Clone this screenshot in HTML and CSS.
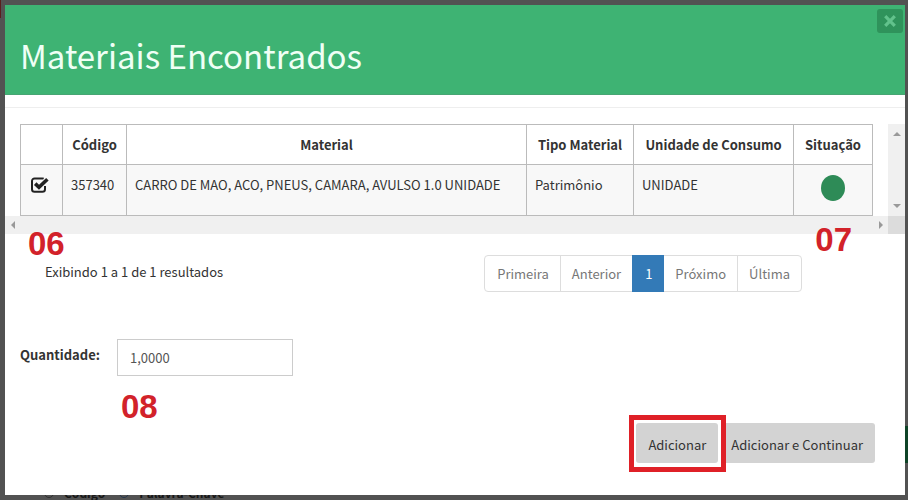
FILE: index.html
```html
<!DOCTYPE html>
<html lang="pt-BR">
<head>
<meta charset="utf-8">
<title>Materiais Encontrados</title>
<link rel="stylesheet" href="styles.css">
</head>
<body>
<div class="page-behind" aria-hidden="true">
  <span class="edge-mark"></span>
  <span class="edge-button"></span>
  <div class="search-options">
    <span class="ring"></span><span>Código</span>
    <span class="ring ring-blue"></span><span>Palavra-Chave</span>
  </div>
</div>
<main class="modal" role="dialog" aria-labelledby="title">
  <header class="modal-header">
    <h1 id="title">Materiais Encontrados</h1>
    <button class="close" type="button" aria-label="Fechar">
      <svg viewBox="0 0 12 12" width="12" height="12"><path d="M1.2 1.2 10.8 10.8M10.8 1.2 1.2 10.8" fill="none" stroke="currentColor" stroke-width="3.2"/></svg>
    </button>
  </header>
  <hr>
  <section class="scroller">
    <div class="table-area">
      <table>
        <colgroup><col class="c-check"><col class="c-code"><col><col class="c-type"><col class="c-unit"><col class="c-status"></colgroup>
        <thead>
          <tr><th></th><th>Código</th><th>Material</th><th>Tipo Material</th><th>Unidade de Consumo</th><th>Situação</th></tr>
        </thead>
        <tbody>
          <tr>
            <td class="cell-check">
              <label class="check">
                <input type="checkbox" checked aria-label="Selecionar material">
                <svg viewBox="0 0 18 16" width="18" height="16"><path d="M14 9v3.2a2.6 2.6 0 0 1-2.6 2.6H3.6A2.6 2.6 0 0 1 1 12.200V4a2.600 2.600 0 0 1 2.600-2.600h7.800q.8 0 1.300.3" fill="none" stroke="currentColor" stroke-width="2"/><path d="M4.200 6.600 8 10.300 16.400 2.300" fill="none" stroke="currentColor" stroke-width="3.600"/></svg>
              </label>
            </td>
            <td>357340</td>
            <td>CARRO DE MAO, ACO, PNEUS, CAMARA, AVULSO 1.0 UNIDADE</td>
            <td>Patrimônio</td>
            <td>UNIDADE</td>
            <td class="cell-status"><span class="status"></span></td>
          </tr>
        </tbody>
      </table>
    </div>
    <div class="bar bar-v"><i class="arrow up"></i><i class="arrow down"></i></div>
    <div class="bar bar-h"><i class="arrow left"></i><i class="arrow right"></i></div>
    <div class="corner"></div>
    <span class="note note-06">06</span>
    <span class="note note-07">07</span>
  </section>
  <div class="results">
    <p>Exibindo 1 a 1 de 1 resultados</p>
    <nav class="pagination" aria-label="Páginas">
      <a href="#">Primeira</a><a href="#">Anterior</a><a href="#" class="current" aria-current="page">1</a><a href="#">Próximo</a><a href="#">Última</a>
    </nav>
  </div>
  <div class="quantity">
    <label for="qty">Quantidade:</label>
    <input id="qty" type="text" value="1,0000">
    <span class="note note-08">08</span>
  </div>
  <footer class="actions">
    <span class="highlight"><button type="button">Adicionar</button></span>
    <button class="continue" type="button">Adicionar e Continuar</button>
  </footer>
</main>
</body>
</html>
```
FILE: styles.css
```css
* { box-sizing: border-box; }

body {
  margin: 0;
  min-height: 100vh;
  padding: 5px 3px 5px 5px;
  background: #525252;
  color: #333;
  font: 13px/20px "Noto Sans CJK SC", "Open Sans", sans-serif;
  overflow: hidden;
}

button, input { font: inherit; color: inherit; }

.page-behind { position: absolute; inset: 0; overflow: hidden; }
.edge-mark { position: absolute; left: 0; top: 0; width: 1px; height: 18px; background: #5a1d1d; }
.edge-button { position: absolute; right: 0; bottom: 37px; width: 6px; height: 37px; background: #0f4427; }
.search-options {
  position: absolute;
  left: 44px;
  bottom: 0;
  display: flex;
  align-items: center;
  gap: 10px;
  color: #171717;
  font-size: 12px;
  font-weight: 700;
  line-height: 14px;
}
.ring { width: 10px; height: 10px; border: 1px solid #303030; border-radius: 50%; }
.ring-blue { margin-left: 4px; border-color: #25364d; }

.modal { position: relative; background: #fff; padding-bottom: 23px; }

.modal-header {
  position: relative;
  display: flex;
  align-items: center;
  height: 90px;
  padding: 10px 15px 0;
  background: #3eb373;
  border-bottom: 1px solid #47a573;
}
h1 { margin: 0; color: #effff5; font-size: 33px; font-weight: 400; line-height: 40px; }
.close {
  position: absolute;
  top: 4px;
  right: 2px;
  display: grid;
  place-items: center;
  width: 26px;
  height: 24px;
  padding: 0;
  border: 0;
  border-radius: 3px;
  background: #2f935b;
  color: #62c28c;
}

hr { height: 1px; margin: 12px 0 16px; border: 0; background: #eee; }

.scroller {
  position: relative;
  display: grid;
  grid-template-columns: 1fr 17px;
  grid-template-rows: auto 18px;
}
.table-area { padding: 0 15px; }
table { width: 100%; table-layout: fixed; border-collapse: collapse; }
.c-check { width: 42px; }
.c-code { width: 64px; }
.c-type { width: 107px; }
.c-unit { width: 160px; }
.c-status { width: 79px; }
th, td { border: 1px solid #bbb; padding: 10px 8px; }
th { height: 40px; padding: 9px 0; font-weight: 700; text-align: center; }
td { height: 51px; background: #f8f8f8; text-align: left; vertical-align: top; }
.cell-check, .cell-status { text-align: center; padding: 12px 0 0; }
.cell-check { padding-right: 4px; }
.check { position: relative; display: inline-grid; }
.check input { position: absolute; inset: 0; margin: 0; opacity: 0; }
.check svg { display: block; color: #222; }
.status { display: block; width: 24px; height: 26px; margin: -2px auto 0; border-radius: 50%; background: #2e8b57; }

.bar { display: flex; justify-content: space-between; align-items: center; background: #f0f0f0; }
.bar-v { flex-direction: column; padding: 8px 0; }
.bar-h { padding: 0 5px 0 6px; }
.corner { background: #dcdcdc; }
.arrow { width: 0; height: 0; border: 4px solid transparent; }
.up { border-top: 0; border-bottom-color: #999; }
.down { border-bottom: 0; border-top-color: #999; }
.left { border-left: 0; border-right-color: #999; }
.right { border-right: 0; border-left-color: #999; }

.note {
  position: absolute;
  color: #d2222a;
  font: 700 33px/32px "Liberation Sans", sans-serif;
}
.note-06 { left: 23px; bottom: -26px; }
.note-07 { right: 53px; bottom: -22px; }
.note-08 { left: 116px; top: 52px; }

.results { display: flex; justify-content: space-between; align-items: flex-start; padding: 21px 103px 0 40px; }
.results p { margin: 7px 0 0; }
.pagination { display: flex; border: 1px solid #ddd; border-radius: 4px; }
.pagination a { padding: 8px 11px 7px; color: #777; text-decoration: none; border-left: 1px solid #ddd; }
.pagination a:first-child { padding-left: 12px; border-left: 0; }
.pagination .current { margin: -1px 0; padding: 9px 12px 8px; border-color: #337ab7; background: #337ab7; color: #fff; }
.pagination .current + a { border-left: 0; }

.quantity { position: relative; display: flex; gap: 17px; margin-top: 47px; padding-left: 15px; }
.quantity label { padding-top: 6px; font-weight: 700; }
.quantity input { width: 176px; height: 37px; padding: 6px 12px; border: 1px solid #ccc; background: #fff; color: #555; }

.actions { display: flex; justify-content: flex-end; align-items: flex-start; margin-top: 39px; padding-right: 30px; }
.actions button { height: 40px; padding: 4px 12px 0; border: 0; border-radius: 3px; background: #d3d3d3; }
.highlight { position: relative; z-index: 1; display: flex; padding: 3px 3px 4px 2px; border: 5px solid #df2027; background: #fff; }
.actions .continue { margin: 8px 0 0 -7px; }
```
